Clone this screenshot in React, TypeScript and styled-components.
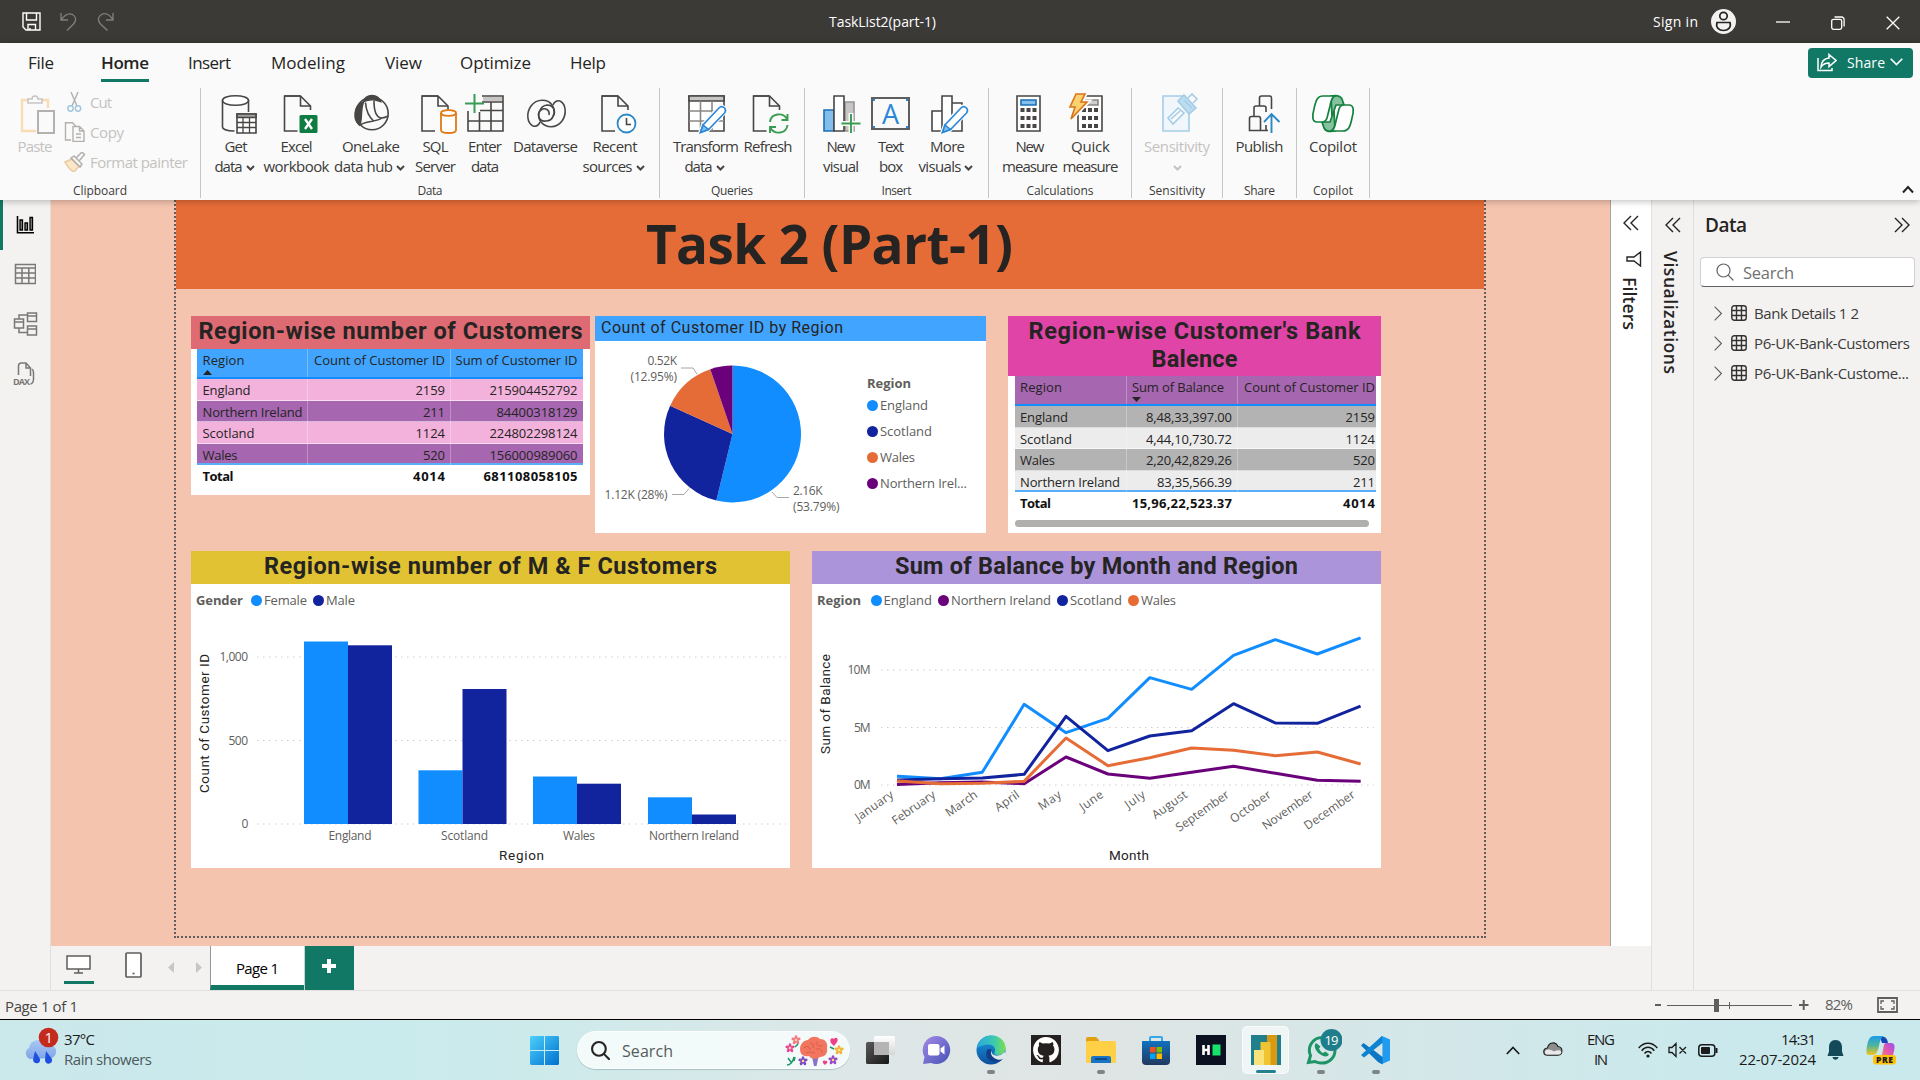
import React, { useLayoutEffect, useRef, useState } from "react";
import styled, { createGlobalStyle, css } from "styled-components";

const ui = `"Open Sans", "Noto Sans", sans-serif`;
const din = `Roboto, "Open Sans", sans-serif`;

const Global = createGlobalStyle`
  *, *::before, *::after { box-sizing: border-box; }
  body { margin: 0; background: #f3f2f1; font-family: ${ui}; overflow: hidden; color: #252423; }
  svg { display: block; flex: none; }
`;

/* ---------- text fitted to a design width ---------- */

const FitSpan = styled.span`
  display: inline-block;
  white-space: nowrap;
`;

function Fit({ w, vertical, children }: { w: number; vertical?: boolean; children: string }) {
  const ref = useRef<HTMLSpanElement>(null);
  const [gap, setGap] = useState(0);
  useLayoutEffect(() => {
    const box = ref.current!.getBoundingClientRect();
    const natural = vertical ? box.height : box.width;
    setGap((w - natural) / (children.length - 1));
  }, []);
  return (
    <FitSpan ref={ref} style={{ letterSpacing: gap, [vertical ? "marginBottom" : "marginRight"]: -gap }}>
      {children}
    </FitSpan>
  );
}

/* ---------- frame ---------- */

const Screen = styled.div`
  width: 1920px;
  height: 1080px;
  display: flex;
  flex-direction: column;
  overflow: hidden;
`;

const TitleBar = styled.header`
  height: 43px;
  flex: none;
  background: #3b3a37;
  color: #fff;
  display: grid;
  grid-template-columns: 829px 824px 1fr;
  align-items: center;
  font-size: 14px;
`;
const QuickAccess = styled.div`
  display: flex;
  gap: 19px;
  padding: 0 0 0 22px;
`;
const WindowControls = styled.div`
  display: flex;
  align-items: center;
`;
const AvatarSlot = styled.div`
  margin: 0 40px 0 13px;
`;
const ControlIcons = styled.div`
  display: flex;
  gap: 41px;
  padding-top: 3px;
`;

const Ribbon = styled.div`
  height: 157px;
  flex: none;
  background: #fafafa;
  position: relative;
  z-index: 2;
  box-shadow: 0 1px 7px rgba(0, 0, 0, 0.28);
`;
const TabRow = styled.nav`
  height: 44px;
  display: flex;
  align-items: flex-start;
  padding: 5px 7px 0 28px;
  font-size: 17px;
  line-height: 29px;
`;
const Tab = styled.div<{ $gap: number; $active?: boolean }>`
  margin-right: ${(p) => p.$gap}px;
  height: 34px;
  ${(p) =>
    p.$active &&
    css`
      font-weight: 600;
      border-bottom: 3px solid #117865;
    `}
`;
const ShareButton = styled.button`
  margin-left: auto;
  width: 105px;
  height: 30px;
  border: 0;
  border-radius: 4px;
  background: #117865;
  color: #fff;
  display: flex;
  align-items: center;
  padding: 0 10px 2px 8px;
  font: 500 14px ${ui};
`;
const ShareText = styled.span`
  margin: 0 5px 0 10px;
`;
const Tools = styled.div`
  display: flex;
  height: 113px;
`;
const Group = styled.section<{ $w: number; $pad?: number }>`
  width: ${(p) => p.$w}px;
  height: 110px;
  margin-top: 1px;
  border-right: 1px solid #c8c6c4;
  padding-left: ${(p) => p.$pad ?? 0}px;
  display: grid;
  grid-template-rows: 94px 16px;
`;
const GroupBody = styled.div`
  display: flex;
`;
const GroupName = styled.div<{ $pad?: number }>`
  margin-left: -${(p) => p.$pad ?? 0}px;
  text-align: center;
  font-size: 12px;
  line-height: 18px;
  color: #3b3a39;
`;
const Tool = styled.div<{ $w: number; $dim?: boolean }>`
  width: ${(p) => p.$w}px;
  padding-top: 6px;
  display: flex;
  flex-direction: column;
  align-items: center;
  color: ${(p) => (p.$dim ? "#c4c2c0" : "#3b3a39")};
  font-size: 15px;
  line-height: 20px;
  & > svg { margin-bottom: 2px; }
`;
const ToolLine = styled.div<{ $menu?: boolean }>`
  height: 20px;
  display: flex;
  align-items: center;
  justify-content: center;
  gap: 3px;
  margin-right: ${(p) => (p.$menu ? 3 : 0)}px;
  & > svg { margin-top: 4px; }
`;
const ClipList = styled.div`
  display: grid;
  grid-template-rows: repeat(3, 30px);
  margin-top: -1px;
  color: #c4c2c0;
  font-size: 15px;
`;
const ClipItem = styled.div`
  display: flex;
  align-items: center;
  gap: 4px;
`;
const CollapseSlot = styled.div`
  margin-left: auto;
  align-self: flex-end;
  padding: 0 6px 6px 0;
`;

const Workspace = styled.div`
  height: 790px;
  flex: none;
  display: grid;
  grid-template-columns: 51px 1600px 43px 1fr;
`;
const Rail = styled.aside`
  background: #f3f2f1;
  border-right: 1px solid #e1dfdd;
  display: flex;
  flex-direction: column;
`;
const RailItem = styled.div<{ $active?: boolean }>`
  height: 50px;
  display: flex;
  align-items: center;
  padding-bottom: ${(p) => (p.$active ? 0 : 2)}px;
  padding-left: ${(p) => (p.$active ? 9 : 12)}px;
  border-left: ${(p) => (p.$active ? "3px solid #117865" : "0")};
`;
const Centre = styled.div`
  display: grid;
  grid-template-rows: 746px 44px;
`;
const StageRow = styled.div`
  display: grid;
  grid-template-columns: 1559px 41px;
`;
const Stage = styled.main`
  background: #f4c4ae;
  padding-left: 123px;
`;
const ReportPage = styled.div`
  width: 1312px;
  height: 738px;
  border: 2px dotted #605e5c;
  border-top: 0;
`;
const Banner = styled.h1`
  margin: 0;
  height: 89px;
  background: #e66c37;
  padding-left: 470px;
  font-size: 53px;
  line-height: 88px;
  font-weight: 700;
  color: #252423;
`;
const CardRow = styled.div<{ $top: number }>`
  display: flex;
  align-items: flex-start;
  padding: ${(p) => p.$top}px 0 0 15px;
`;
const Card = styled.section<{ $w: number; $h: number; $gap?: number }>`
  width: ${(p) => p.$w}px;
  height: ${(p) => p.$h}px;
  margin-right: ${(p) => p.$gap ?? 0}px;
  background: #fff;
`;
const CardTitle = styled.h2<{ $bg: string; $h: number }>`
  margin: 0;
  height: ${(p) => p.$h}px;
  padding-top: 1px;
  background: ${(p) => p.$bg};
  color: #252423;
  font: 700 23.5px/28px ${din};
  text-align: center;
`;
const SmallTitle = styled.h3`
  margin: 0;
  height: 25px;
  background: #41a4ff;
  color: #252423;
  font: 400 16px/23px ${din};
  padding-left: 6px;
`;

/* ---------- data tables ---------- */

const Table = styled.div<{ $ml: number; $w: number }>`
  margin-left: ${(p) => p.$ml}px;
  width: ${(p) => p.$w}px;
  font-size: 13px;
`;
const Row = styled.div<{ $cols: string; $bg?: string; $kind?: string }>`
  display: grid;
  grid-template-columns: ${(p) => p.$cols};
  height: 21.5px;
  line-height: 22px;
  background: ${(p) => p.$bg ?? "transparent"};
  border-bottom: 1px solid rgba(255, 255, 255, 0.55);
  ${(p) =>
    p.$kind === "head" &&
    css`
      height: 30px;
      line-height: 22px;
      border-bottom: 2px solid #118dff;
    `}
  ${(p) =>
    p.$kind === "last" &&
    css`
      border-bottom: 2px solid #5aaef8;
    `}
  ${(p) =>
    p.$kind === "total" &&
    css`
      font-weight: 700;
      border: 0;
      color: #111;
      line-height: 23px;
    `}
`;
const Cell = styled.div<{ $pad?: number; $line?: boolean; $left?: boolean }>`
  text-align: ${(p) => (p.$left ? "left" : "right")};
  padding: 0 ${(p) => p.$pad ?? 6}px 0 ${(p) => (p.$left ? 5.5 : 0)}px;
  border-right: ${(p) => (p.$line ? "1px solid rgba(255,255,255,0.28)" : "0")};
  white-space: nowrap;
  & > svg { margin-top: -1px; }
`;
const Thumb = styled.div`
  width: 354px;
  height: 7px;
  border-radius: 4px;
  background: #b0afae;
  margin: 6px 0 0 7px;
`;

/* ---------- legends ---------- */

const Legend = styled.div`
  display: flex;
  align-items: center;
  height: 32px;
  padding-left: 5px;
  color: #605e5c;
  font-size: 13px;
`;
const LegendName = styled.b<{ $gap: number }>`
  font-weight: 700;
  margin-right: ${(p) => p.$gap}px;
`;
const Dot = styled.i<{ $c: string }>`
  width: 11px;
  height: 11px;
  border-radius: 50%;
  background: ${(p) => p.$c};
  flex: none;
  margin-right: 2px;
`;
const Series = styled.span`
  display: flex;
  align-items: center;
  margin-right: 6px;
`;
const PieBody = styled.div`
  display: grid;
  grid-template-columns: 272px 1fr;
`;
const PieLegend = styled.div`
  padding-top: 33px;
  color: #605e5c;
  font-size: 13px;
  display: grid;
  grid-template-rows: 18px 26px 26px 26px 26px;
`;

/* ---------- side panes ---------- */

const FilterPane = styled.aside`
  background: #fff;
  border-left: 1px solid #a6a4a2;
  padding: 15px 0 0 12px;
  font-size: 17.5px;
  font-weight: 600;
`;
const VizPane = styled.aside`
  background: #f3f2f1;
  border-left: 1px solid #e1dfdd;
  border-right: 1px solid #e1dfdd;
  padding: 17px 0 0 13px;
  font-size: 17.5px;
  font-weight: 600;
`;
const Sideways = styled.div<{ $top: number; $left: number }>`
  writing-mode: vertical-rl;
  line-height: 24px;
  margin: ${(p) => p.$top}px 0 0 ${(p) => p.$left}px;
`;
const FilterIconSlot = styled.div`
  margin: 20px 0 0 3px;
`;
const DataPane = styled.aside`
  background: #f3f2f1;
  padding: 11px 5px 0 6px;
  border-left: 1px solid #e1dfdd;
  margin-left: -1px;
`;
const DataHead = styled.div`
  display: flex;
  justify-content: space-between;
  align-items: center;
  height: 28px;
  padding: 0 5px 0 5px;
  font-size: 19px;
  font-weight: 600;
`;
const SearchBox = styled.div`
  margin: 18px 0 11px;
  height: 30px;
  background: #fff;
  border: 1px solid #d1d1d1;
  border-bottom-color: #616161;
  border-radius: 4px;
  display: flex;
  align-items: center;
  gap: 9px;
  padding-left: 15px;
  font-size: 16.5px;
  color: #707070;
`;
const Field = styled.div`
  height: 30px;
  display: flex;
  align-items: center;
  padding-left: 14px;
  font-size: 15px;
  color: #3b3a39;
  & > svg:nth-child(1) { margin-right: 9px; }
  & > svg:nth-child(2) { margin-right: 7px; }
`;

/* ---------- bottom bars ---------- */

const PageTabs = styled.div`
  background: #f3f2f1;
  display: flex;
  align-items: stretch;
`;
const ViewModes = styled.div`
  width: 159px;
  display: flex;
  padding: 6px 8px 0 13px;
`;
const DesktopMode = styled.div`
  width: 30px;
  height: 32px;
  border-bottom: 3px solid #117865;
  padding: 3px 0 0 2px;
`;
const PhoneSlot = styled.div`
  margin-left: 31px;
`;
const Pager = styled.div`
  display: flex;
  gap: 22px;
  margin: 10px 0 0 26px;
`;
const PageTab = styled.div`
  width: 94px;
  border-left: 1px solid #979593;
  border-bottom: 5px solid #117865;
  background: #fff;
  text-align: center;
  font-size: 15px;
  line-height: 45px;
  color: #000;
`;
const AddPage = styled.div`
  width: 50px;
  background: #117865;
  border-left: 1px solid #d0d0d0;
  display: flex;
  justify-content: center;
  padding: 13px 1px 0 0;
`;
const StatusBar = styled.footer`
  height: 30px;
  flex: none;
  background: #f3f2f1;
  border-top: 1px solid #e1dfdd;
  border-bottom: 1px solid #000;
  display: flex;
  justify-content: space-between;
  padding: 0 22px 0 5px;
  font-size: 15px;
  line-height: 30px;
  color: #484644;
`;
const ZoomTools = styled.div`
  display: flex;
  align-items: center;
  line-height: 28px;
  color: #605e5c;
`;
const ZoomValue = styled.div`
  margin: 0 24px 2px 16px;
`;
const Taskbar = styled.div`
  height: 60px;
  flex: none;
  background: linear-gradient(90deg, #cbe8eb 0, #caebed 20%, #cdeaeb 28%, #dde7e7 44%, #dfe5e4 57%, #d3e7e9 75%, #cbe9ec 88%, #c9e9ec 100%);
  display: grid;
  grid-template-columns: 530px 976px 1fr;
  font-size: 15px;
  color: #1b1b1b;
`;
const Weather = styled.div`
  display: flex;
  padding: 4px 0 0 22px;
  gap: 5px;
  line-height: 20px;
`;
const WeatherText = styled.div`
  padding-top: 5px;
  & > div:last-child { color: #4c5a5c; }
`;
const Apps = styled.div`
  display: flex;
  align-items: flex-start;
  padding-top: 6px;
`;
const AppTile = styled.div<{ $active?: boolean }>`
  width: 55px;
  height: 48px;
  display: flex;
  flex-direction: column;
  align-items: center;
  padding-top: 9px;
  ${(p) =>
    p.$active &&
    css`
      width: 47px;
      margin: 0 4px;
      background: rgba(255, 255, 255, 0.6);
      border: 1px solid rgba(255, 255, 255, 0.6);
      border-radius: 5px;
      padding-top: 8px;
    `}
`;
const Running = styled.i<{ $on?: boolean }>`
  margin-top: 5px;
  width: ${(p) => (p.$on ? 20 : 8)}px;
  height: 4px;
  border-radius: 2px;
  background: ${(p) => (p.$on ? "#23808f" : "#7e8484")};
`;
const SearchPill = styled.div`
  width: 273px;
  height: 38px;
  margin: 5px 3px 0 0;
  border-radius: 19px;
  background: rgba(247, 252, 252, 0.88);
  border: 1px solid rgba(255, 255, 255, 0.7);
  box-shadow: 0 1px 1px rgba(0, 60, 70, 0.22);
  display: flex;
  align-items: center;
  padding: 1px 5px 0 13px;
  font-size: 16px;
  color: #565c5d;
  & > svg:first-child { margin-right: 12px; }
  & > svg:last-child { margin-left: auto; }
`;
const StartSlot = styled.div`
  width: 47px;
  padding-top: 10px;
`;
const Tray = styled.div`
  display: flex;
  align-items: center;
  line-height: 20px;
`;
const TraySlot = styled.div<{ $ml: number; $center?: boolean; $up?: number }>`
  margin-left: ${(p) => p.$ml}px;
  margin-bottom: ${(p) => p.$up ?? 0}px;
  text-align: ${(p) => (p.$center ? "center" : "right")};
`;

/* ---------- ribbon icons ---------- */

const K = "#484644";
const Ico = ({ dx = 0, children }: { dx?: number; children: React.ReactNode }) => (
  <svg width="42" height="40" viewBox={`${-1 - dx} 0 42 40`} overflow="visible" fill="none" stroke={K} strokeWidth="1.6">
    {children}
  </svg>
);
const Sheet = ({ x = 7 }: { x?: number }) => (
  <g>
    <path d={`M${x + 0.5} 2h16l10 10v4`} fill="#fafafa" />
    <path d={`M${x - 0.3} 2h16.8M${x + 0.5} 2v35h13`} />
    <path d={`M${x + 16.5} 2v10h10`} />
  </g>
);
const Down = ({ c = K }: { c?: string }) => (
  <svg width="9" height="6" viewBox="0 0 9 6" fill="none" stroke={c} strokeWidth="2">
    <path d="M1 1l3.5 3.5L8 1" />
  </svg>
);
const Pencil = () => (
  <g>
    <path d="M38 14c-2-2-4-2-6 0L17 31l-3 8 8-3 16-17c1.500-2 1.500-3 0-5z" fill="#fff" stroke="#fafafa" strokeWidth="4" />
    <path d="M38.500 14c-2-1.800-4-1.500-5.500 0L17 31l-2.500 7.500 8-3L38.500 19c1.300-1.600 1.300-3.400 0-5z" fill="#fff" stroke="#2b88d8" />
    <path d="M17 31l-2.500 7.500 8-3z" fill="#83beec" stroke="#2b88d8" />
  </g>
);
const CalcKeys = ({ x, y }: { x: number; y: number }) => (
  <g fill={K} stroke="none">
    {[0, 1, 2].map((r) => [0, 1, 2].map((c) => <rect key={`${r}${c}`} x={x + c * 6} y={y + r * 8} width="4" height="4" />))}
  </g>
);

const icons: Record<string, React.ReactNode> = {
  paste: (
    <Ico>
      <g stroke="#f8dcb4" strokeWidth="2.400">
        <path d="M21 37H7V6h6M27 6h6v8" />
      </g>
      <path d="M13 9V5h4c0-4 6-4 6 0h4v4z" stroke="#c8c6c4" />
      <path d="M23 17h16v22H23z" fill="#fafafa" stroke="#b3b0ad" strokeWidth="2" />
    </Ico>
  ),
  getdata: (
    <Ico>
      <path d="M6.500 6v27c0 2 4 4 12 4M32.500 6v12" />
      <ellipse cx="19.500" cy="6.500" rx="13" ry="4.800" fill="#fff" />
      <path d="M21 20h19v19H21z" fill="#fff" />
      <path d="M21 20h19v3.500H21z" fill="#a19f9d" />
      <path d="M27 24v15M33.500 24v15M21 28.500h19M21 33.500h19" strokeWidth="1.300" />
    </Ico>
  ),
  excel: (
    <Ico dx={1}>
      <Sheet x={6} />
      <rect x="21.500" y="21" width="18" height="18" rx="1.500" fill="#107c41" stroke="none" />
      <path d="M27 25l7 10M34 25l-7 10" stroke="#fff" strokeWidth="2.400" />
    </Ico>
  ),
  onelake: (
    <Ico>
      <circle cx="21" cy="19.500" r="16.200" />
      <path d="M12.500 7.500C15-.5 27-.5 29.500 7.500c-6-2.500-11-2.500-17 0z" fill={K} />
      <path d="M12.500 8C2 12 2 26 8.500 31c3-4 .5-14 4-23z" fill={K} />
      <path d="M14.500 8.500c.5 8 3 14 8.500 19M23 7c0 9 2 16 7 17 4 0 5-1 7-2M9 31c5-4 17-3 22-7" />
    </Ico>
  ),
  sql: (
    <Ico dx={0.5}>
      <Sheet x={5} />
      <path d="M24.500 19v17c0 4 15 4 15 0V19" stroke="#e07b17" fill="#fff" strokeWidth="1.800" />
      <ellipse cx="32" cy="19" rx="7.500" ry="2.800" stroke="#e07b17" fill="#fff" strokeWidth="1.800" />
    </Ico>
  ),
  enter: (
    <Ico>
      <path d="M3 17v20h35V2H17M15 16.500h23M3 27h35M14.500 18v19M26 8v29M17 8h21" />
      <path d="M18 3h19v4H18z" fill="#c8c6c4" stroke="none" />
      <path d="M9.500 0v19M0 9.500h19" stroke="#3a9b52" strokeWidth="2" />
    </Ico>
  ),
  dataverse: (
    <Ico>
      <path d="M7 32C1 29 0 19 5 12 11 4 22 5 26 11c5 7 1 16-6 16-7 1-10-7-5-11 4-3 9 0 8 5" />
      <path d="M34 7c6 3 7 13 2 20-6 8-16 7-21 1-5-7-1-16 6-17 7 0 9 7 6 11" />
      <path d="M7 32c3 1 6-1 7-4M34 7c-3-1-6 1-7 4" />
    </Ico>
  ),
  recent: (
    <Ico dx={0.5}>
      <Sheet x={6} />
      <circle cx="31" cy="29.500" r="9" stroke="#2b88c8" fill="#fff" strokeWidth="1.800" />
      <path d="M31 24v6.500h4.500" />
    </Ico>
  ),
  transform: (
    <Ico>
      <path d="M3 2h35v35H3z" fill="#fff" />
      <path d="M3 2h35v5H3z" fill="#c8c6c4" />
      <path d="M14.500 7v30M26 7v30M3 17h35M3 27h35" stroke="#8a8886" />
      <Pencil />
    </Ico>
  ),
  refresh: (
    <Ico>
      <Sheet x={5} />
      <g stroke="#3a9b52" strokeWidth="1.900">
        <path d="M22 28c1-9 13-10 17-3M39.500 31c-1 9-13 10-17 3M39.500 20v6h-6M22 39v-6h6" />
      </g>
    </Ico>
  ),
  newvisual: (
    <Ico dx={-0.5}>
      <path d="M24.500 8h9v29h-9z" fill="#c8c6c4" stroke="#979593" />
      <path d="M3.500 16h10v21h-10z" fill="#83beec" stroke="#1b6fb5" />
      <path d="M13.500 2h10v35h-10z" fill="#fff" />
      <path d="M30.500 19v21M20 29.500h20" stroke="#fafafa" strokeWidth="5" />
      <path d="M30.500 20v19M21 29.500h19" stroke="#3a9b52" strokeWidth="1.900" />
    </Ico>
  ),
  more: (
    <Ico>
      <path d="M4 17h10v20H4zM24 9h10v28H24zM14 2h10v35H14z" fill="#fff" />
      <Pencil />
    </Ico>
  ),
  newmeasure: (
    <Ico dx={-1}>
      <path d="M8 2h23v35H8z" fill="#fff" />
      <path d="M12 6h15v5H12z" fill="#83beec" stroke="#1b6fb5" />
      <CalcKeys x={11.500} y={14} />
    </Ico>
  ),
  quick: (
    <Ico dx={-1}>
      <path d="M8 2h24v35H8z" fill="#fff" />
      <path d="M14 6h14v5H14z" fill="#d2d0ce" stroke="#8a8886" />
      <CalcKeys x={12} y={14} />
      <path d="M6 0h9l-4 8h6L1 25l4-12H0z" fill="#fbd26f" stroke="#fafafa" strokeWidth="5" />
      <path d="M6 0h9l-4 8h6L1 25l4-12H0z" fill="#fbd26f" stroke="#d9741b" />
    </Ico>
  ),
  sensitivity: (
    <Ico>
      <g stroke="#a5cde8">
        <path d="M26 2H6v35h26V20" fill="#f0f6fa" />
        <path d="M11 24l10-10 6 5-11 11z" fill="#fafafa" />
        <path d="M14 25l9-8" />
        <path d="M21 7l6-6 12 13-7 6z" fill="#bcdcf0" />
        <path d="M31 4l4-4 5 5-4 4M27 6l8 8" />
      </g>
    </Ico>
  ),
  publish: (
    <Ico dx={1}>
      <path d="M27 36.500H8.500V24.500a2 2 0 012-2h7a2 2 0 012 2v12M13 22v-8a2 2 0 012-2h8a2 2 0 012 2v4M18.500 12V4a2 2 0 012-2h8a2 2 0 012 2v11M25 31v5" />
      <path d="M30.500 39V21M23 28l7.500-8 8 8" stroke="#2b88c8" strokeWidth="1.900" />
    </Ico>
  ),
  copilot: (
    <Ico>
      <g stroke="#15803f" strokeWidth="1.700">
        <path d="M18 2c5-1 9-1 11 3l2 6h-8l-4 11z" fill="#86c2a0" />
        <path d="M22 37c-5 1-9 1-11-3l-2-6h8l4-11z" fill="#86c2a0" />
        <path d="M9 28H4c-5 0-5-6-3-13C3 5 5 2 10 2h13c-4 0-5 5-6 10l-3 12c-1 3-3 4-5 4z" fill="#fff" />
        <path d="M31 11h5c5 0 5 6 3 13-2 10-4 13-9 13H17c4 0 5-5 6-10l3-12c1-3 3-4 5-4z" fill="#fff" />
      </g>
    </Ico>
  ),
};

const TextBoxIcon = styled.div`
  width: 42px;
  height: 42px;
  padding: 3px 1px 0;
`;
const TextBoxFrame = styled.div`
  border: 2px solid #605e5c;
  height: 33px;
  width: 39px;
  text-align: center;
  font: 400 27px/29px ${ui};
  color: #2b88d8;
  background:
    linear-gradient(#2b88d8, #2b88d8) 0 0 / 4px 4px no-repeat border-box,
    linear-gradient(#2b88d8, #2b88d8) 100% 0 / 4px 4px no-repeat border-box,
    linear-gradient(#2b88d8, #2b88d8) 0 100% / 4px 4px no-repeat border-box,
    linear-gradient(#2b88d8, #2b88d8) 100% 100% / 4px 4px no-repeat border-box;
`;

type Line = [string, number];
function RibbonTool(p: { icon: string; w: number; a: Line; b?: Line; menu?: boolean; dim?: boolean }) {
  return (
    <Tool $w={p.w} $dim={p.dim}>
      {p.icon === "textbox" ? (
        <TextBoxIcon>
          <TextBoxFrame>A</TextBoxFrame>
        </TextBoxIcon>
      ) : (
        icons[p.icon]
      )}
      <ToolLine>
        <Fit w={p.a[1]}>{p.a[0]}</Fit>
      </ToolLine>
      <ToolLine $menu={p.menu && !!p.b}>
        {p.b && <Fit w={p.b[1]}>{p.b[0]}</Fit>}
        {p.menu && <Down c={p.dim ? "#c4c2c0" : K} />}
      </ToolLine>
    </Tool>
  );
}

const groups = [
  {
    name: "Data", nw: 25, w: 459, pad: 12,
    tools: [
      { icon: "getdata", w: 46, a: ["Get", 23], b: ["data", 28], menu: true },
      { icon: "excel", w: 75, a: ["Excel", 32], b: ["workbook", 66] },
      { icon: "onelake", w: 74, a: ["OneLake", 58], b: ["data hub", 59], menu: true },
      { icon: "sql", w: 55, a: ["SQL", 26], b: ["Server", 41] },
      { icon: "enter", w: 44, a: ["Enter", 34], b: ["data", 28] },
      { icon: "dataverse", w: 77, a: ["Dataverse", 65] },
      { icon: "recent", w: 62, a: ["Recent", 45], b: ["sources", 50], menu: true },
    ],
  },
  {
    name: "Queries", nw: 42, w: 145, pad: 9,
    tools: [
      { icon: "transform", w: 74, a: ["Transform", 66], b: ["data", 28], menu: true },
      { icon: "refresh", w: 50, a: ["Refresh", 49] },
    ],
  },
  {
    name: "Insert", nw: 30, w: 184, pad: 11,
    tools: [
      { icon: "newvisual", w: 50, a: ["New", 29], b: ["visual", 36] },
      { icon: "textbox", w: 50, a: ["Text", 26], b: ["box", 24] },
      { icon: "more", w: 63, a: ["More", 35], b: ["visuals", 43], menu: true },
    ],
  },
  {
    name: "Calculations", nw: 67, w: 143, pad: 11,
    tools: [
      { icon: "newmeasure", w: 60, a: ["New", 29], b: ["measure", 56] },
      { icon: "quick", w: 61, a: ["Quick", 39], b: ["measure", 56] },
    ],
  },
  { name: "Sensitivity", nw: 56, w: 91, pad: 0, tools: [{ icon: "sensitivity", w: 90, a: ["Sensitivity", 66], menu: true, dim: true }] },
  { name: "Share", nw: 31, w: 74, pad: 0, tools: [{ icon: "publish", w: 73, a: ["Publish", 48] }] },
  { name: "Copilot", nw: 40, w: 73, pad: 0, tools: [{ icon: "copilot", w: 72, a: ["Copilot", 48] }] },
] as any[];

const tabs: [string, number, number, boolean?][] = [
  ["File", 26, 47], ["Home", 48, 39, true], ["Insert", 43, 40], ["Modeling", 74, 40],
  ["View", 37, 38], ["Optimize", 71, 39], ["Help", 36, 0],
];

/* ---------- chevrons ---------- */

const Guillemet = ({ flip }: { flip?: boolean }) => (
  <svg width="16" height="16" viewBox="0 0 16 16" fill="none" stroke="#252423" strokeWidth="1.400">
    <path d={flip ? "M1 1l7 7-7 7M8 1l7 7-7 7" : "M8 1L1 8l7 7M15 1L8 8l7 7"} />
  </svg>
);
const Lens = ({ s, c, w = 1.5 }: { s: number; c: string; w?: number }) => (
  <svg width={s} height={s} viewBox="0 0 18 18" fill="none" stroke={c} strokeWidth={w} strokeLinecap="round">
    <circle cx="7.500" cy="7.500" r="6.500" />
    <path d="M12.200 12.200L17 17" />
  </svg>
);

/* ---------- tables ---------- */

type Col = { head: Line; cells: Line[]; total: Line };
function DataTable(p: {
  ml: number; w: number; cols: string; headBg: string; bgs: [string, string]; data: Col[]; sort: [number, string]; lastPad: number;
}) {
  const row = (pick: (c: Col) => Line, head?: boolean) =>
    p.data.map((c, i) => {
      const [t, w] = pick(c);
      return (
        <Cell key={i} $left={i === 0 || (head && i === 1 && p.sort[0] === 1)} $line={i < 2} $pad={i === 2 ? p.lastPad : 5}>
          <Fit w={w}>{t}</Fit>
          {head && p.sort[0] === i && (
            <svg width="9" height="5" viewBox="0 0 9 5">
              <path d={p.sort[1]} fill="#252423" />
            </svg>
          )}
        </Cell>
      );
    });
  return (
    <Table $ml={p.ml} $w={p.w}>
      <Row $cols={p.cols} $bg={p.headBg} $kind="head">{row((c) => c.head, true)}</Row>
      {[0, 1, 2, 3].map((i) => (
        <Row key={i} $cols={p.cols} $bg={p.bgs[i % 2]} $kind={i === 3 ? "last" : ""}>{row((c) => c.cells[i])}</Row>
      ))}
      <Row $cols={p.cols} $kind="total">{row((c) => c.total)}</Row>
    </Table>
  );
}

/* ---------- charts ---------- */

const Svg = styled.svg`
  font-family: ${ui};
  font-size: 12px;
  fill: #605e5c;
`;
const AxisTitle = styled.text`
  font-family: ${din};
  font-size: 13.5px;
  fill: #252423;
`;

function slice(cx: number, cy: number, r: number, from: number, to: number) {
  const pt = (f: number) => `${cx + r * Math.sin(2 * Math.PI * f)} ${cy - r * Math.cos(2 * Math.PI * f)}`;
  return `M${cx} ${cy}L${pt(from)}A${r} ${r} 0 ${to - from > 0.5 ? 1 : 0} 1 ${pt(to)}Z`;
}

const PieChart = () => (
  <Svg width="272" height="191" viewBox="595 341 272 191">
    <path d={slice(732.5, 434, 68.5, 0, 0.5379)} fill="#118dff" />
    <path d={slice(732.5, 434, 68.5, 0.5379, 0.8179)} fill="#12239e" />
    <path d={slice(732.5, 434, 68.5, 0.8179, 0.9474)} fill="#e66c37" />
    <path d={slice(732.5, 434, 68.5, 0.9474, 1)} fill="#6b007b" />
    <path d="M681 368h12l4 6M672 494.500h12l5-6M772 492l5 5.500h12" fill="none" stroke="#a6a6a6" />
    <text x="647.500" y="365" textLength="29.500">0.52K</text>
    <text x="630.500" y="381" textLength="46.500">(12.95%)</text>
    <text x="604.500" y="499" textLength="63">1.12K (28%)</text>
    <text x="793" y="495" textLength="29.500">2.16K</text>
    <text x="793" y="511" textLength="46.500">(53.79%)</text>
  </Svg>
);

const bars: [string, number, number, number, number][] = [
  ["England", 304, 641.5, 645.3, 43],
  ["Scotland", 418.5, 770.3, 689, 47],
  ["Wales", 533, 776.5, 783.7, 32],
  ["Northern Ireland", 648, 797.3, 814.5, 90],
];

const BarChart = () => (
  <Svg width="599" height="252" viewBox="191 616 599 252">
    {[657, 740.5, 824].map((y, i) => (
      <g key={y}>
        <path d={`M257 ${y}H786`} stroke="#cfcfcf" strokeDasharray="1.500 4.500" fill="none" />
        <text x={[219.5, 228.5, 241.5][i]} y={y + 4} textLength={[28.5, 19.5, 6.5][i]}>{["1,000", "500", "0"][i]}</text>
      </g>
    ))}
    {bars.map(([name, x, f, m, w]) => (
      <g key={name}>
        <rect x={x} y={f} width="44" height={824 - f} fill="#118dff" />
        <rect x={x + 44} y={m} width="44" height={824 - m} fill="#12239e" />
        <text x={x + 46 - w / 2} y="840" textLength={w}>{name}</text>
      </g>
    ))}
    <AxisTitle x="499" y="860" textLength="45">Region</AxisTitle>
    <AxisTitle transform="translate(209 793) rotate(-90)" textLength="139">Count of Customer ID</AxisTitle>
  </Svg>
);

const lines: [string, number[]][] = [
  ["#118dff", [709, 716, 697, 493, 578, 535, 413, 448, 346, 299, 342, 295]],
  ["#6b007b", [733, 728, 726, 731, 651, 702, 715, 697, 679, 700, 721, 724]],
  ["#12239e", [720, 716, 714, 703, 529, 632, 588, 572, 491, 549, 550, 500]],
  ["#e66c37", [723, 731, 730, 724, 594, 677, 653, 624, 631, 647, 636, 671]],
];
const months: Line[] = [
  ["January", 44], ["February", 50], ["March", 36], ["April", 27], ["May", 25], ["June", 26],
  ["July", 22], ["August", 40], ["September", 62], ["October", 47], ["November", 59], ["December", 59],
];

const LineChart = () => (
  <Svg width="569" height="252" viewBox="812 616 569 252">
    {[670, 727.5, 785].map((y, i) => (
      <g key={y}>
        <path d={`M881 ${y}H1374`} stroke="#cfcfcf" strokeDasharray="1.500 4.500" fill="none" />
        <text x={[847.5, 854, 854][i]} y={y + 4} textLength={[23, 16.5, 16.5][i]}>{["10M", "5M", "0M"][i]}</text>
      </g>
    ))}
    {lines.map(([c, ys]) => (
      <polyline key={c} fill="none" stroke={c} strokeWidth="3" strokeLinejoin="round" strokeLinecap="square"
        points={ys.map((y, i) => `${898.5 + i * 41.88},${540 + y / 3}`).join(" ")} />
    ))}
    {months.map(([m, w], i) => (
      <g key={m} transform={`translate(${894.500 + i * 41.950} 796.500) rotate(-35)`}>
        <text x={-w} y="0" textLength={w}>{m}</text>
      </g>
    ))}
    <AxisTitle x="1109" y="860" textLength="40">Month</AxisTitle>
    <AxisTitle transform="translate(830 754) rotate(-90)" textLength="100">Sum of Balance</AxisTitle>
  </Svg>
);

const Item = ({ c, t, w }: { c: string; t: string; w: number }) => (
  <Series>
    <Dot $c={c} />
    <Fit w={w}>{t}</Fit>
  </Series>
);

/* ---------- taskbar icons ---------- */

const S30 = ({ children }: { children: React.ReactNode }) => (
  <svg width="30" height="30" viewBox="0 0 30 30">{children}</svg>
);
const BadgedIcon = styled.svg`
  margin-top: -6px;
`;
const apps: { k: string; art: React.ReactNode; run?: boolean; active?: boolean }[] = [
  {
    k: "taskview",
    art: (
      <S30>
        <defs>
          <linearGradient id="tv" x1="0" y1="0" x2="1" y2="1"><stop stopColor="#5a5a5a" /><stop offset="1" stopColor="#161616" /></linearGradient>
          <linearGradient id="tw" x1="0" y1="0" x2="0" y2="1"><stop stopColor="#fff" /><stop offset="1" stopColor="#d6d6d6" /></linearGradient>
        </defs>
        <rect x="0" y="7" width="23" height="22" rx="1.500" fill="url(#tv)" />
        <rect x="8" y="1" width="21" height="19" rx="1.500" fill="url(#tw)" />
        <rect x="8" y="7" width="15" height="13" fill="#b4b4b4" />
      </S30>
    ),
  },
  {
    k: "chat",
    art: (
      <S30>
        <defs><linearGradient id="ch" x1="0" y1="0" x2="1" y2="1"><stop stopColor="#a68bea" /><stop offset="1" stopColor="#4452b5" /></linearGradient></defs>
        <path d="M15 1a14 14 0 11-5 27l-8 1 1.500-7A14 14 0 0115 1z" fill="url(#ch)" />
        <rect x="7" y="9" width="11.500" height="11.500" rx="2" fill="#fff" />
        <path d="M19.500 13.500l4-3v9l-4-3z" fill="#fff" />
      </S30>
    ),
  },
  {
    k: "edge",
    run: true,
    art: (
      <S30>
        <defs>
          <linearGradient id="e1" x1="0" y1="0" x2="1" y2="0"><stop stopColor="#2aa7e0" /><stop offset=".6" stopColor="#3cc9b0" /><stop offset="1" stopColor="#7be04a" /></linearGradient>
          <linearGradient id="e2" x1="0" y1="0" x2="0" y2="1"><stop stopColor="#1b9de2" /><stop offset="1" stopColor="#0c4f9e" /></linearGradient>
        </defs>
        <circle cx="15" cy="15" r="14.500" fill="url(#e2)" />
        <path d="M1 13C2 5 9 .5 15 .5c9 0 14.500 6 14.500 12 0 5-4 7.500-8 7.500-3 0-4-1-3-2.500 2-4-1-8-6-8-5 0-9 2-11.500 3.500z" fill="url(#e1)" />
        <path d="M11 15c-3 7 2 12 9 12 3 0 5-1 7-3-3 1-8 1-11-3-1.500-2-1.500-4 0-6-2-1.500-4-1.500-5 0z" fill="#123f87" />
        <path d="M16 15c-1.500 3 1 6 6 5.500 3-.5 5-1.500 6.500-4L30 22l-3 2c-4 1.500-8 .5-10.500-2.500-2-2.500-2-4.500-.5-6.500z" fill="#dfe8e8" />
      </S30>
    ),
  },
  {
    k: "github",
    art: (
      <S30>
        <rect width="30" height="30" fill="#24201f" />
        <path transform="translate(1.500 1.500) scale(1.125)" fill="#fff" d="M12 .5C5.600.5.500 5.700.500 12c0 5.100 3.300 9.400 7.900 10.900.6.1.8-.2.8-.6v-2c-3.200.7-3.900-1.500-3.900-1.500-.5-1.300-1.300-1.700-1.300-1.700-1-.7.1-.7.1-.7 1.200.1 1.800 1.200 1.800 1.200 1 1.800 2.700 1.300 3.400 1 .1-.8.4-1.300.7-1.600-2.600-.3-5.300-1.300-5.300-5.700 0-1.300.5-2.300 1.200-3.100-.1-.3-.5-1.500.1-3.100 0 0 1-.3 3.200 1.200a11 11 0 015.800 0c2.200-1.500 3.200-1.200 3.200-1.200.6 1.600.2 2.800.1 3.100.7.8 1.200 1.900 1.200 3.100 0 4.500-2.700 5.400-5.300 5.700.4.4.8 1.100.8 2.100v3.200c0 .3.2.7.8.6A11.500 11.500 0 0023.500 12C23.500 5.700 18.400.500 12 .500z" />
      </S30>
    ),
  },
  {
    k: "files",
    run: true,
    art: (
      <S30>
        <path d="M0 4a2 2 0 012-2h8l3 3v6H0z" fill="#dfa014" />
        <rect x="0" y="6" width="30" height="22" rx="1.500" fill="#ffcf45" />
        <path d="M5 28v-5a2 2 0 012-2h16a2 2 0 012 2v5z" fill="#1a76c4" />
        <path d="M9 24h12" stroke="#0b4c8c" strokeWidth="2" />
      </S30>
    ),
  },
  {
    k: "store",
    art: (
      <S30>
        <defs><linearGradient id="st" x1="0" y1="0" x2="0" y2="1"><stop stopColor="#1072c0" /><stop offset="1" stopColor="#23375e" /></linearGradient></defs>
        <path d="M9 7V3a1 1 0 011-1h10a1 1 0 011 1v4" fill="none" stroke="#35a7e8" strokeWidth="2" />
        <path d="M1 6h28v20a4 4 0 01-4 4H5a4 4 0 01-4-4z" fill="url(#st)" />
        <path d="M9 12h5.500v5.500H9z" fill="#f25022" /><path d="M15.500 12H21v5.500h-5.500z" fill="#7fba00" />
        <path d="M9 18.500h5.500V24H9z" fill="#00a4ef" /><path d="M15.500 18.500H21V24h-5.500z" fill="#ffb900" />
      </S30>
    ),
  },
  {
    k: "hacker",
    art: (
      <S30>
        <rect width="30" height="30" fill="#0b1120" />
        <path d="M7.500 10v10M12.500 10v10M7.500 15h5" stroke="#fff" strokeWidth="2.600" />
        <rect x="16.500" y="9.500" width="8" height="11" fill="#16e36b" />
      </S30>
    ),
  },
  {
    k: "powerbi",
    active: true,
    art: (
      <S30>
        <rect width="30" height="30" fill="#1f7f8c" />
        <rect x="16" y="0" width="10" height="30" fill="#d99a12" />
        <rect x="9.500" y="7" width="10" height="23" fill="#f0c332" />
        <rect x="3" y="15" width="10" height="15" fill="#fae27a" />
      </S30>
    ),
  },
  {
    k: "whatsapp",
    run: true,
    art: (
      <BadgedIcon width="42" height="36" viewBox="-6 -6 42 36">
        <path d="M2.500 27.500l2-7A12.800 12.800 0 1115 28c-2 0-4-.5-6-1.500z" fill="none" stroke="#1d9465" strokeWidth="3" />
        <path d="M10 8c-3 3 0 8 3 10.500s8 4.500 10 1l-3.500-3-2.500 1.500c-2-1-3-2.500-4-4.500l1.500-2z" fill="#1d9465" />
        <circle cx="25.500" cy="5" r="11" fill="#1f7e8c" />
        <text x="18.500" y="10" fontFamily={ui} fontSize="13" fill="#fff" textLength="14">19</text>
      </BadgedIcon>
    ),
  },
  {
    k: "vscode",
    run: true,
    art: (
      <S30>
        <path d="M21 1l8 3.500v21L21 29 6 15z" fill="#1f9cf0" />
        <path d="M21.500 8v14l-9-7zM2.500 8L0 10.500 17 27l4.500 2.500V22z" fill="#0a77c4" />
        <path d="M21.500 8L3 22.500 0 20 21 1z" fill="#0e83d1" />
        <path d="M21.500 8v14l-9-7z" fill="#d9e6e7" />
      </S30>
    ),
  },
];

const Blossoms = () => (
  <svg width="61" height="32" viewBox="0 0 61 32">
    {[[7, 13, "#e8489c"], [13, 5, "#f07a8c"], [50, 25, "#9a48c8"], [56, 15, "#f0b53c"], [20, 26, "#7e4bc4"]].map(([x, y, c], i) => (
      <g key={i} fill={c as string}>
        {[0, 72, 144, 216, 288].map((a) => (
          <ellipse key={a} cx={x as number} cy={(y as number) - 2.600} rx="1.500" ry="2.200" transform={`rotate(${a} ${x} ${y})`} />
        ))}
        <circle cx={x as number} cy={y as number} r="1.200" fill="#ffe27a" />
      </g>
    ))}
    <path d="M4 30c3 0 6-3 7-8M5 23l3 4M12 22l-1 4M15 9l-3 3M47 12l4 2" stroke="#1f9a6c" strokeWidth="1.600" fill="none" />
    <path d="M48 8c-2-4 1-6 3-4 2-3 5 0 3 3l-3 4zM40 28c-1-2 1-3 2-2 2-1 3 1 2 2l-2 2z" fill="#ee3f87" />
    <path d="M29 22l2 9h2.500l2-9z" fill="#8a72c8" />
    <path d="M17 14c0-5 4-9 8-9 3-4 9-4 12-1 6 0 8 5 7 9 1 5-2 9-7 9-4 3-9 2-11-1-6 1-9-2-9-7z" fill="#f2755f" />
    <path d="M21 13c3-3 6-1 6 2M27 8c3 0 4 3 3 5M34 7c-1 4 3 5 6 3M33 14c4-1 6 1 6 4M23 18c3-2 6 0 9 0" stroke="#d95c4a" fill="none" strokeWidth="1" />
  </svg>
);

/* ---------- page ---------- */

const G = "#7a7877";

export default function App() {
  return (
    <Screen>
      <Global />
      <TitleBar>
        <QuickAccess>
          <svg width="19" height="19" viewBox="0 0 19 19" fill="none" stroke="#fff" strokeWidth="1.400">
            <path d="M1 1h17v17H4l-3-3zM4.500 1v7h10V1M6 18v-5.500h7.500V18M8 16v2" />
          </svg>
          <svg width="18" height="19" viewBox="0 0 18 19" fill="none" stroke="#83817e" strokeWidth="1.300">
            <path d="M1 1v7h7M1 8C5 2.500 8.500 .500 12.500 2.500c4 2.500 4 6 1 9.500L7 18.500" />
          </svg>
          <svg width="18" height="19" viewBox="0 0 18 19" fill="none" stroke="#83817e" strokeWidth="1.300">
            <path d="M16 1v7H9M16 8C12.500 2.500 8.500 .500 4.500 2.500c-4 2.500-4 6-1 9.500l7 6.500" />
          </svg>
        </QuickAccess>
        <div><Fit w={107}>TaskList2(part-1)</Fit></div>
        <WindowControls>
          <Fit w={45}>Sign in</Fit>
          <AvatarSlot>
            <svg width="25" height="25" viewBox="0 0 25 25">
              <circle cx="12.500" cy="12.500" r="12.500" fill="#f3f2f1" />
              <g fill="none" stroke="#252423" strokeWidth="1.700">
                <circle cx="12.500" cy="7" r="3.700" />
                <path d="M6 13.500h13c1.500 5-2 8-6.500 8S4.500 18.500 6 13.500z" />
              </g>
            </svg>
          </AvatarSlot>
          <ControlIcons>
            <svg width="14" height="14" viewBox="0 0 14 14" stroke="#fff" strokeWidth="1.300"><path d="M0 6h14" /></svg>
            <svg width="14" height="14" viewBox="0 0 14 14" stroke="#fff" fill="none" strokeWidth="1.300">
              <rect x=".7" y="3.300" width="10" height="10" rx="1.800" /><path d="M3.500 1h7a2.500 2.500 0 012.600 2.500v7" />
            </svg>
            <svg width="14" height="14" viewBox="0 0 14 14" stroke="#fff" strokeWidth="1.300"><path d="M.7.7l12.600 12.600M13.300.7L.7 13.300" /></svg>
          </ControlIcons>
        </WindowControls>
      </TitleBar>

      <Ribbon>
        <TabRow>
          {tabs.map(([t, w, gap, on]) => (
            <Tab key={t} $gap={gap} $active={on}><Fit w={w}>{t}</Fit></Tab>
          ))}
          <ShareButton>
            <svg width="21" height="19" viewBox="0 0 21 19" fill="none" stroke="#fff" strokeWidth="1.500">
              <path d="M2 5v12.500h14V15M13 1.500l7 6-7 6v-3.500c-4 0-6 1-8 4 .3-5 3-8.500 8-9z" />
            </svg>
            <ShareText><Fit w={38}>Share</Fit></ShareText>
            <svg width="13" height="8" viewBox="0 0 13 8" fill="none" stroke="#fff" strokeWidth="1.600"><path d="M.7.8l5.800 5.800L12.300.8" /></svg>
          </ShareButton>
        </TabRow>
        <Tools>
          <Group $w={201} $pad={8}>
            <GroupBody>
              <RibbonTool icon="paste" w={54} a={["Paste", 35]} dim />
              <ClipList>
                <ClipItem>
                  <svg width="24" height="20" viewBox="0 0 24 20" fill="none" stroke="#b3b0ad" strokeWidth="1.400">
                    <path d="M9 0l6 14M16 0L10 14" /><g stroke="#9fc6e0"><circle cx="8.500" cy="16.500" r="2.700" /><circle cx="16" cy="16.500" r="2.700" /></g>
                  </svg>
                  <Fit w={22}>Cut</Fit>
                </ClipItem>
                <ClipItem>
                  <svg width="24" height="20" viewBox="0 0 24 20" fill="none" stroke="#b3b0ad" strokeWidth="1.400">
                    <path d="M9 18H3.500V.7h7l3 3M11 4.500h6.500l4.500 4.500v10.500H11zM17.500 4.500V9H22M14 12h5M14 15.500h5" />
                  </svg>
                  <Fit w={34}>Copy</Fit>
                </ClipItem>
                <ClipItem>
                  <svg width="24" height="20" viewBox="0 0 24 20" fill="none" stroke="#b3b0ad" strokeWidth="1.500">
                    <path d="M3 10l7-3 7 7-5 6C8 18 5 14 3 10z" fill="#fbe6c8" stroke="#ecc9a0" /><path d="M9 6l3-2 8 8-2 3zM14 6l6-6 2.500 2.500L17 9" />
                  </svg>
                  <Fit w={98}>Format painter</Fit>
                </ClipItem>
              </ClipList>
            </GroupBody>
            <GroupName $pad={8}><Fit w={54}>Clipboard</Fit></GroupName>
          </Group>
          {groups.map((g) => (
            <Group key={g.name} $w={g.w} $pad={g.pad}>
              <GroupBody>{g.tools.map((t: any) => <RibbonTool key={t.icon} {...t} />)}</GroupBody>
              <GroupName $pad={g.pad}><Fit w={g.nw}>{g.name}</Fit></GroupName>
            </Group>
          ))}
          <CollapseSlot>
            <svg width="12" height="9" viewBox="0 0 12 9" fill="none" stroke="#252423" strokeWidth="2"><path d="M1 7.500L6 2l5 5.500" /></svg>
          </CollapseSlot>
        </Tools>
      </Ribbon>

      <Workspace>
        <Rail>
          <RailItem $active>
            <svg width="24" height="24" viewBox="12 213 24 24" fill="#8a8886" stroke="#000" strokeWidth="1.300">
              <path d="M17.500 216v16.700H34" fill="none" strokeWidth="1.600" />
              <path d="M20 220h2.500v10H20zM25 223h2.500v7H25zM30 217.500h2.500V230H30z" />
            </svg>
          </RailItem>
          <RailItem>
            <svg width="24" height="24" viewBox="0 0 24 24" fill="none" stroke={G} strokeWidth="1.500">
              <path d="M3.500 2.500h20v19h-20zM3.500 6h20M3.500 11h20M3.500 16h20M10 6v15.500M16.800 6v15.500" />
            </svg>
          </RailItem>
          <RailItem>
            <svg width="26" height="26" viewBox="0 0 26 26" fill="none" stroke={G} strokeWidth="1.500">
              <path d="M2.500 8h9v9h-9zM2.500 11h9M15.500 2h9v8.500h-9zM15.500 5h9M15.500 15h9v9h-9zM15.500 18h9M7 8V4h8.500M7 17v4.500h8.500" />
            </svg>
          </RailItem>
          <RailItem>
            <svg width="26" height="26" viewBox="0 0 26 26" fill="none" stroke={G} strokeWidth="1.500">
              <path d="M6.500 14V5c0-2 1-3 3-3H14l4.500 5v8M14 2v5h4.500M20 8c1.500 1 1.500 2 1.500 4v6c0 3-1 4.500-3 5" />
              <text x="1" y="24" fontFamily={ui} fontSize="9" fontWeight="700" fill={G} stroke="none" textLength="17">DAX</text>
            </svg>
          </RailItem>
        </Rail>

        <Centre>
          <StageRow>
            <Stage>
              <ReportPage>
                <Banner><Fit w={367}>Task 2 (Part-1)</Fit></Banner>
                <CardRow $top={27}>
                  <Card $w={399} $h={179} $gap={5}>
                    <CardTitle $bg="#de6a73" $h={33}><Fit w={384}>Region-wise number of Customers</Fit></CardTitle>
                    <DataTable
                      ml={6} w={386} cols="111px 143px 132px" headBg="#41a4ff" bgs={["#f2b2dc", "#a666b0"]}
                      sort={[0, "M0 5L4.500 0 9 5z"]} lastPad={5.5}
                      data={[
                        { head: ["Region", 42], cells: [["England", 48], ["Northern Ireland", 100], ["Scotland", 52], ["Wales", 35]], total: ["Total", 31] },
                        { head: ["Count of Customer ID", 131], cells: [["2159", 29.5], ["211", 22], ["1124", 29.5], ["520", 22]], total: ["4014", 32] },
                        { head: ["Sum of Customer ID", 122], cells: [["215904452792", 88], ["84400318129", 81], ["224802298124", 88], ["156000989060", 88]], total: ["681108058105", 94] },
                      ]}
                    />
                  </Card>
                  <Card $w={391} $h={217} $gap={22}>
                    <SmallTitle><Fit w={242}>Count of Customer ID by Region</Fit></SmallTitle>
                    <PieBody>
                      <PieChart />
                      <PieLegend>
                        <b><Fit w={44}>Region</Fit></b>
                        <Item c="#118dff" t="England" w={48} />
                        <Item c="#12239e" t="Scotland" w={52} />
                        <Item c="#e66c37" t="Wales" w={35} />
                        <Item c="#6b007b" t="Northern Irel..." w={87} />
                      </PieLegend>
                    </PieBody>
                  </Card>
                  <Card $w={373} $h={217}>
                    <CardTitle $bg="#e044a7" $h={60}>
                      <Fit w={332}>Region-wise Customer's Bank</Fit>
                      <br />
                      <Fit w={86}>Balence</Fit>
                    </CardTitle>
                    <DataTable
                      ml={6.5} w={361} cols="112px 111.5px 137.5px" headBg="#a666b0" bgs={["#b3b3b3", "#ececec"]}
                      sort={[1, "M0 0h9L4.500 5z"]} lastPad={0.5}
                      data={[
                        { head: ["Region", 42], cells: [["England", 48], ["Scotland", 52], ["Wales", 35], ["Northern Ireland", 100]], total: ["Total", 31] },
                        { head: ["Sum of Balance", 92], cells: [["8,48,33,397.00", 86], ["4,44,10,730.72", 86], ["2,20,42,829.26", 86], ["83,35,566.39", 75]], total: ["15,96,22,523.37", 100] },
                        { head: ["Count of Customer ID", 131], cells: [["2159", 29.5], ["1124", 29.5], ["520", 22], ["211", 22]], total: ["4014", 32] },
                      ]}
                    />
                    <Thumb />
                  </Card>
                </CardRow>
                <CardRow $top={18}>
                  <Card $w={599} $h={317} $gap={22}>
                    <CardTitle $bg="#e0c232" $h={33}><Fit w={453}>Region-wise number of M &amp; F Customers</Fit></CardTitle>
                    <Legend>
                      <LegendName $gap={8}><Fit w={47}>Gender</Fit></LegendName>
                      <Item c="#118dff" t="Female" w={43} />
                      <Item c="#12239e" t="Male" w={29} />
                    </Legend>
                    <BarChart />
                  </Card>
                  <Card $w={569} $h={317}>
                    <CardTitle $bg="#ab94da" $h={33}><Fit w={403}>Sum of Balance by Month and Region</Fit></CardTitle>
                    <Legend>
                      <LegendName $gap={9.5}><Fit w={44}>Region</Fit></LegendName>
                      <Item c="#118dff" t="England" w={48.5} />
                      <Item c="#6b007b" t="Northern Ireland" w={100} />
                      <Item c="#12239e" t="Scotland" w={52} />
                      <Item c="#e66c37" t="Wales" w={35} />
                    </Legend>
                    <LineChart />
                  </Card>
                </CardRow>
              </ReportPage>
            </Stage>
            <FilterPane>
              <Guillemet />
              <FilterIconSlot>
                <svg width="16" height="16" viewBox="0 0 16 16" fill="none" stroke="#252423" strokeWidth="1.400">
                  <path d="M14.500 1v14L8 10H1V6h7z" />
                </svg>
              </FilterIconSlot>
              <Sideways $top={10} $left={-5}><Fit w={53} vertical>Filters</Fit></Sideways>
            </FilterPane>
          </StageRow>
          <PageTabs>
            <ViewModes>
              <DesktopMode>
                <svg width="25" height="19" viewBox="0 0 25 19" fill="#fff" stroke="#605e5c" strokeWidth="1.500">
                  <path d="M1 1h23v13H1zM12.500 14v4M8 18h9" />
                </svg>
              </DesktopMode>
              <PhoneSlot>
                <svg width="17" height="26" viewBox="0 0 17 26" fill="#fff" stroke="#605e5c" strokeWidth="1.700">
                  <rect x="1" y="1" width="15" height="24" rx="1" /><path d="M7.500 21.500h2" />
                </svg>
              </PhoneSlot>
              <Pager>
                <svg width="6" height="11" viewBox="0 0 6 11"><path d="M6 0v11L0 5.500z" fill="#c8c6c4" /></svg>
                <svg width="6" height="11" viewBox="0 0 6 11"><path d="M0 0v11l6-5.500z" fill="#c8c6c4" /></svg>
              </Pager>
            </ViewModes>
            <PageTab><Fit w={43}>Page 1</Fit></PageTab>
            <AddPage>
              <svg width="14" height="14" viewBox="0 0 14 14" stroke="#fff" strokeWidth="4"><path d="M7 0v14M0 7h14" /></svg>
            </AddPage>
          </PageTabs>
        </Centre>

        <VizPane>
          <Guillemet />
          <Sideways $top={18} $left={-6}><Fit w={123} vertical>Visualizations</Fit></Sideways>
        </VizPane>

        <DataPane>
          <DataHead><Fit w={42}>Data</Fit><Guillemet flip /></DataHead>
          <SearchBox><Lens s={18} c="#616161" w={1.200} /><Fit w={51}>Search</Fit></SearchBox>
          {([["Bank Details 1 2", 105], ["P6-UK-Bank-Customers", 156], ["P6-UK-Bank-Custome...", 155]] as Line[]).map(([t, w]) => (
            <Field key={t}>
              <svg width="8" height="15" viewBox="0 0 8 15" fill="none" stroke="#605e5c" strokeWidth="1.100"><path d="M.6.6l6.800 6.900-6.800 6.900" /></svg>
              <svg width="16" height="16" viewBox="0 0 16 16" fill="none" stroke="#323130" strokeWidth="1.400">
                <rect x=".8" y=".8" width="14.400" height="14.400" rx="2.500" /><path d="M5.500 1v14M10.500 1v14M1 5.500h14M1 10.500h14" />
              </svg>
              <Fit w={w}>{t}</Fit>
            </Field>
          ))}
        </DataPane>
      </Workspace>

      <StatusBar>
        <Fit w={73}>Page 1 of 1</Fit>
        <ZoomTools>
          <svg width="154" height="16" viewBox="1655 997 154 16" fill="none" stroke="#605e5c">
            <path d="M1655 1005h6" strokeWidth="2" /><path d="M1667 1005.500h125M1729.500 1002v7" />
            <rect x="1714" y="999" width="5" height="13" fill="#605e5c" stroke="none" />
            <path d="M1799 1005h9.500M1803.700 1000v10" strokeWidth="2" />
          </svg>
          <ZoomValue><Fit w={28}>82%</Fit></ZoomValue>
          <svg width="21" height="16" viewBox="0 0 21 16" fill="none" stroke="#605e5c" strokeWidth="1.300">
            <path d="M1 1h19v14H1z" strokeWidth="1.800" /><path d="M4 7V4h3M14 4h3v3M17 9v3h-3M7 12H4V9" />
          </svg>
        </ZoomTools>
      </StatusBar>

      <Taskbar>
        <Weather>
          <svg width="37" height="42" viewBox="22 1024 37 42">
            <defs>
              <linearGradient id="wc" x1="0" y1="0" x2="0" y2="1"><stop stopColor="#a9c9f5" /><stop offset="1" stopColor="#7fa5e6" /></linearGradient>
            </defs>
            <path d="M30 1059a6 6 0 01-1-11 9 9 0 0117-3 7 7 0 016 13z" fill="url(#wc)" />
            <path d="M35 1051l5 8c1 5-6 6-7 1zM46 1051l6 8c1 6-7 6-7 1z" fill="#1d4fe0" />
            <circle cx="48.500" cy="1037.500" r="9.800" fill="#c42b1c" />
            <text x="44.800" y="1042.500" fontFamily={ui} fontSize="14" fill="#fff">1</text>
          </svg>
          <WeatherText>
            <div><Fit w={31}>37°C</Fit></div>
            <div><Fit w={88}>Rain showers</Fit></div>
          </WeatherText>
        </Weather>
        <Apps>
          <StartSlot>
            <svg width="29" height="29" viewBox="0 0 29 29">
              <defs><linearGradient id="wl" gradientUnits="userSpaceOnUse" x1="0" y1="0" x2="29" y2="29"><stop stopColor="#4cd0fb" /><stop offset="1" stopColor="#0071cf" /></linearGradient></defs>
              <path d="M1 0h13v14H0V1zM15 0h13l1 1v13H15zM0 15h14v14H1l-1-1zM15 15h14v13l-1 1H15z" fill="url(#wl)" />
            </svg>
          </StartSlot>
          <SearchPill>
            <Lens s={19} c="#252423" w={2} />
            <Fit w={51}>Search</Fit>
            <Blossoms />
          </SearchPill>
          {apps.map((a) => (
            <AppTile key={a.k} $active={a.active}>
              {a.art}
              {(a.run || a.active) && <Running $on={a.active} />}
            </AppTile>
          ))}
        </Apps>
        <Tray>
          <svg width="14" height="9" viewBox="0 0 14 9" fill="none" stroke="#1b1b1b" strokeWidth="1.700"><path d="M.8 8L7 1.500 13.200 8" /></svg>
          <TraySlot $ml={23} $up={2}>
            <svg width="20" height="14" viewBox="0 0 20 14" stroke="#1b1b1b" strokeWidth="1.100">
              <path d="M4.500 13.200C-.5 13-.5 6.500 4.500 6c1-6 8-7 10.500-1.500 5 .5 5.500 8 0 8.700z" fill="#8d8d8d" />
              <path d="M4.500 12.600c-3.500 0-3.500-5 .5-5.200 3-.2 4 1 6 2 3-1.500 7-1.500 7.300.6 0 1.800-1.300 2.600-3.300 2.600z" fill="#e9e9e9" stroke="none" />
            </svg>
          </TraySlot>
          <TraySlot $ml={24} $center $up={2}>
            <div><Fit w={28}>ENG</Fit></div>
            <div><Fit w={14}>IN</Fit></div>
          </TraySlot>
          <TraySlot $ml={23}>
            <svg width="20" height="16" viewBox="0 0 20 16" fill="none" stroke="#1b1b1b" strokeWidth="1.500">
              <path d="M.7 6c5-6.500 13.600-6.500 18.600 0M3.700 8.700c3.500-4.500 9.100-4.500 12.600 0M6.500 11.500c2-2.600 5-2.600 7 0" /><circle cx="10" cy="14" r="1.600" fill="#1b1b1b" stroke="none" />
            </svg>
          </TraySlot>
          <TraySlot $ml={10}>
            <svg width="19" height="16" viewBox="0 0 19 16" fill="none" stroke="#1b1b1b" strokeWidth="1.300">
              <path d="M1 5.500h3l4-4v13l-4-4H1zM11.500 5l6.500 6.500M18 5l-6.500 6.500" />
            </svg>
          </TraySlot>
          <TraySlot $ml={11}>
            <svg width="20" height="13" viewBox="0 0 20 13" fill="none" stroke="#1b1b1b" strokeWidth="1.500">
              <rect x=".8" y=".8" width="16" height="11.400" rx="3" /><path d="M18.500 4v5" strokeWidth="2" /><rect x="3" y="3" width="9" height="7" rx="1" fill="#1b1b1b" stroke="none" />
            </svg>
          </TraySlot>
          <TraySlot $ml={21} $up={2}>
            <div><Fit w={35}>14:31</Fit></div>
            <div><Fit w={77}>22-07-2024</Fit></div>
          </TraySlot>
          <TraySlot $ml={11}>
            <svg width="17" height="20" viewBox="0 0 17 20" fill="#14495a">
              <path d="M8.500 0C4 0 2 3.500 2 7v4.500L.5 16h16L15 11.500V7c0-3.500-2-7-6.500-7zM5.500 17h6c-.5 3.500-5.500 3.500-6 0z" />
            </svg>
          </TraySlot>
          <TraySlot $ml={22}>
            <svg width="30" height="29" viewBox="0 0 30 29">
              <defs>
                <linearGradient id="c1" x1="0" y1="0" x2="0" y2="1"><stop stopColor="#1a9bea" /><stop offset=".5" stopColor="#4fb59a" /><stop offset="1" stopColor="#f5c518" /></linearGradient>
                <linearGradient id="c2" x1="1" y1="0" x2="0" y2="1"><stop stopColor="#9a4bf0" /><stop offset=".5" stopColor="#e85aa8" /><stop offset="1" stopColor="#ff9a4a" /></linearGradient>
              </defs>
              <path d="M14 1c4-1 7 0 8 6h-6z" fill="#1546b8" />
              <path d="M8 0h10c-3 1-4 5-5 10s-3 9-6 9H3c-3 0-3-4-2-9C2 4 4 0 8 0z" fill="url(#c1)" />
              <path d="M20 7h5c4 0 4 4 3 8-1 5-2 8-6 8h-9c3-1 3-5 4-9 1-5 1-7 3-7z" fill="url(#c2)" />
              <rect x="7" y="19" width="23" height="9.500" rx="3" fill="#ffc20a" />
              <text x="10" y="27" fontFamily={ui} fontSize="8.500" fontWeight="800" fill="#1b1b1b" textLength="17">PRE</text>
            </svg>
          </TraySlot>
        </Tray>
      </Taskbar>
    </Screen>
  );
}
